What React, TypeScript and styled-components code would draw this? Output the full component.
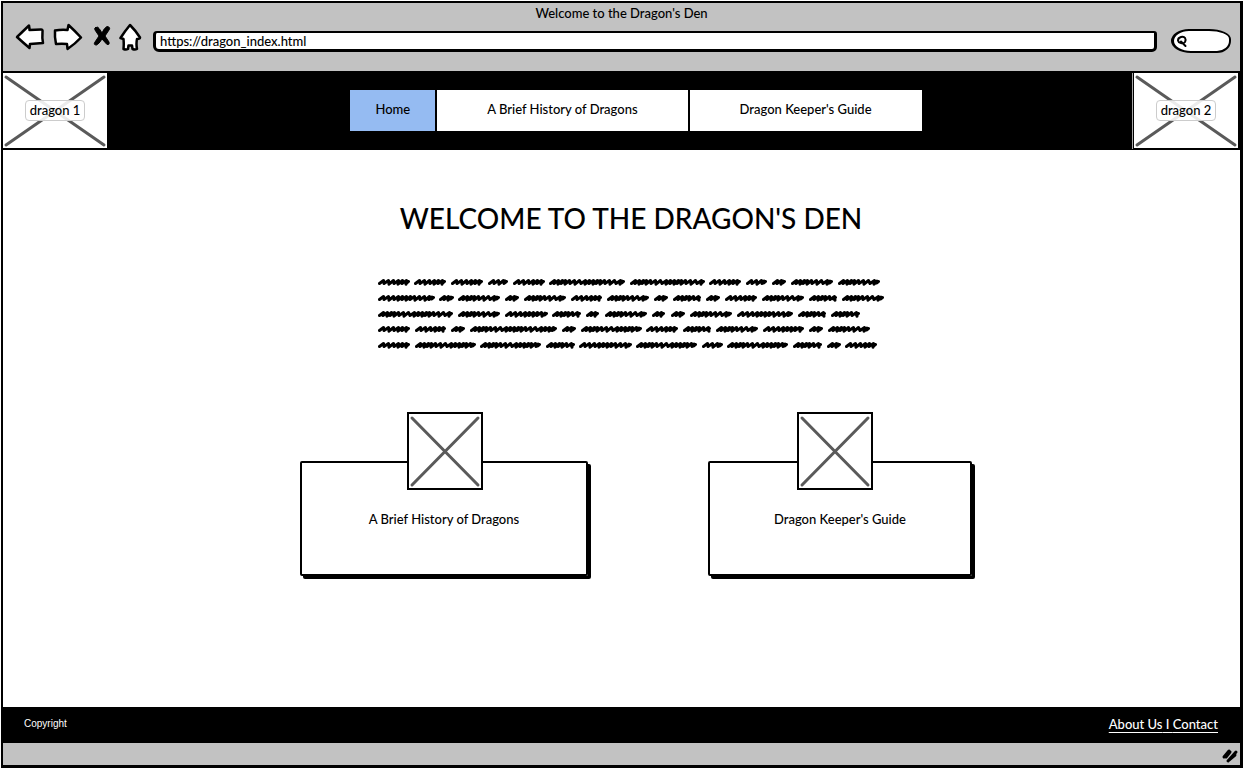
import React from "react";
import styled, { createGlobalStyle } from "styled-components";

const ink = "#000";
const chrome = "#c2c2c2";

const GlobalStyle = createGlobalStyle`
  *, *::before, *::after { box-sizing: border-box; }
  body {
    margin: 0;
    background: #fff;
    color: ${ink};
    font: 500 13px/18px Lato, "Liberation Sans", sans-serif;
  }
  a { color: inherit; text-decoration: none; }
`;

const Page = styled.div`
  display: flex;
  min-height: 100vh;
  padding: 1px;
`;

const Window = styled.div`
  flex: 1;
  min-width: 0;
  display: flex;
  flex-direction: column;
  border: 3px solid ${ink};
  border-width: 2px 3px 3px 2px;
  background: #fff;
`;

const Chrome = styled.div`
  background: ${chrome};
`;

const TitleBar = styled.div`
  padding: 1px 0;
  text-align: center;
`;

const Toolbar = styled.form`
  display: flex;
  align-items: flex-start;
  gap: 8px;
  height: 48px;
  padding: 0 9px 0 12px;
`;

const ToolButton = styled.button`
  flex: none;
  display: block;
  padding: 0;
  border: 0;
  background: none;
  cursor: pointer;
  svg { display: block; }
`;

const AddressField = styled.input`
  flex: 1;
  min-width: 0;
  height: 21px;
  margin: 8px 0 0;
  padding: 0 4px 1px;
  border: 3px solid ${ink};
  border-width: 2px 3px 3px;
  border-radius: 4px 3px 5px 6px;
  background: #fff;
  color: ${ink};
  font: inherit;
  outline: 0;
`;

const SearchBox = styled.label`
  flex: none;
  display: flex;
  align-items: center;
  width: 60px;
  height: 24px;
  margin: 6px 0 0 6px;
  padding-left: 2px;
  border: 3px solid ${ink};
  border-width: 2px 2px 2px 3px;
  border-radius: 18px 22px 14px 20px / 12px 10px 12px 12px;
  background: #fff;
  svg { flex: none; display: block; }
`;

const SearchField = styled.input`
  flex: 1;
  min-width: 0;
  height: 16px;
  padding: 0 4px;
  border: 0;
  background: none;
  font: inherit;
  outline: 0;
`;

const Banner = styled.header`
  display: flex;
  align-items: center;
  justify-content: space-between;
  height: 79px;
  background: ${ink};
`;

const BannerImage = styled.div`
  flex: none;
  display: grid;
  place-items: center;
  width: 104px;
  height: 75px;
  background: #fff;
  > * { grid-area: 1 / 1; }
`;

const BannerFrame = styled.div<{ $edge?: boolean }>`
  padding: 0 2px 1px ${(p) => (p.$edge ? 1 : 0)}px;
  border-left: ${(p) => (p.$edge ? "1px solid #aaa" : "0")};
`;

const Cross = styled.svg`
  display: block;
  width: 100%;
  height: 100%;
  stroke: #5a5a5a;
  stroke-width: 3;
  stroke-linecap: round;
`;

const Caption = styled.span`
  z-index: 1;
  padding: 0 4px 1px;
  border: 1px solid #ccc;
  border-radius: 4px;
  background: rgba(255, 255, 255, 0.88);
`;

const Nav = styled.nav`
  display: flex;
  gap: 2px;
  margin-left: 31px;
`;

const NavLink = styled.a<{ $active?: boolean; $pad: number }>`
  padding: 10px ${(p) => p.$pad}px 13px;
  background: ${(p) => (p.$active ? "#95bbf2" : "#fff")};
`;

const Main = styled.main`
  flex: 1;
  display: flex;
  flex-direction: column;
  align-items: center;
  padding: 50px 0 80px 19px;
`;

const Heading = styled.h1`
  margin: 0;
  font-size: 28px;
  line-height: 36px;
  font-weight: 500;
`;

const Scribble = styled.svg`
  display: block;
  margin-top: 38px;
  fill: none;
  stroke: ${ink};
  stroke-width: 3;
  stroke-linecap: round;
  stroke-linejoin: round;
`;

const Cards = styled.div`
  display: flex;
  gap: 120px;
  margin-top: 107px;
  padding-left: 10px;
`;

const Card = styled.a<{ $width: number }>`
  display: flex;
  flex-direction: column;
  align-items: stretch;
  width: ${(p) => p.$width}px;
  min-height: 115px;
  border: 2px solid ${ink};
  border-radius: 2px;
  box-shadow: 3px 3px 0 ${ink};
  text-align: center;
`;

const Thumb = styled.div<{ $inset: number }>`
  width: 76px;
  height: 78px;
  margin: -51px 0 20px ${(p) => p.$inset}px;
  border: 2px solid ${ink};
  background: #fff;
`;

const Footer = styled.footer`
  display: flex;
  align-items: center;
  justify-content: space-between;
  height: 36px;
  padding: 0 22px 2px 21px;
  background: ${ink};
  color: #fff;
`;

const Copyright = styled.small`
  font: 10px/14px "Liberation Sans", sans-serif;
`;

const FooterLinks = styled.span`
  text-decoration: underline;
  text-underline-offset: 3px;
  text-decoration-thickness: 1px;
`;

const StatusBar = styled.div`
  display: flex;
  justify-content: flex-end;
  height: 22px;
  padding: 5px 1px 0 0;
  background: ${chrome};
`;

function Icon({ width, d, fill = "#fff", stroke = 2.5 }: { width: number; d: string; fill?: string; stroke?: number }) {
  return (
    <svg width={width} height="30" viewBox={`0 0 ${width} 30`} fill={fill} stroke={ink} strokeWidth={stroke} strokeLinejoin="round" strokeLinecap="round">
      <path d={d} />
    </svg>
  );
}

function Crossed({ w, h }: { w: number; h: number }) {
  return (
    <Cross viewBox={`0 0 ${w} ${h}`} preserveAspectRatio="none" aria-hidden="true">
      <path d={`M3 4L${w - 3} ${h - 3}M${w - 3} 4L3 ${h - 3}`} />
    </Cross>
  );
}

// Start and end of every placeholder word, line by line.
const lines: number[][][] = [
  [[0, 32], [36, 68], [73, 105], [110, 130], [135, 167], [171, 247], [252, 327], [331, 363], [368, 389], [394, 408], [413, 455], [460, 502]],
  [[0, 57], [61, 76], [80, 122], [127, 141], [146, 188], [193, 224], [229, 271], [276, 290], [295, 323], [328, 342], [347, 379], [384, 426], [431, 459], [464, 506]],
  [[0, 75], [80, 122], [127, 170], [174, 203], [208, 221], [227, 269], [274, 287], [293, 307], [312, 354], [359, 415], [420, 448], [453, 482]],
  [[0, 32], [37, 68], [73, 87], [92, 179], [184, 198], [203, 264], [268, 300], [305, 333], [338, 380], [385, 426], [431, 445], [450, 492]],
  [[0, 32], [37, 98], [102, 163], [168, 197], [201, 254], [258, 319], [324, 345], [349, 410], [415, 444], [449, 463], [467, 499]],
];

const sparse = [5, 5, 5, 4, 4, 4, 4];
const dense = [4, 4, 3, 4, 5, 5, 6, 4];

function word(from: number, to: number, y: number) {
  const length = to - from;
  const steps = length < 16 || (length > 26 && length < 30) || length > 58 || length === 42 ? dense : sparse;
  let x = from + 1.5;
  let d = `M${x} ${y + 1.5}`;
  for (let i = 0; x < to - 6; i++) {
    const step = steps[i % steps.length];
    d += `L${x + 4} ${y - 1.5}L${x + step - 0.5} ${y + 1.5 + (i % 2) * 0.7}`;
    x += step;
  }
  return `${d}L${to - 3} ${y - 1}L${to - 3.5} ${y + 1}L${to - 1.5} ${y - 0.5}`;
}

function PlaceholderText() {
  return (
    <Scribble width="506" height="80" viewBox="0 0 506 80" role="img" aria-label="Placeholder paragraph">
      {lines.map((row, i) => (
        <path key={i} d={row.map(([a, b]) => word(a, b, 8 + Math.round(i * 15.8))).join("")} />
      ))}
    </Scribble>
  );
}

export default function App() {
  return (
    <Page>
      <GlobalStyle />
      <Window>
        <Chrome>
          <TitleBar>Welcome to the Dragon's Den</TitleBar>
          <Toolbar onSubmit={(e) => e.preventDefault()}>
            <ToolButton type="button" aria-label="Back">
              <Icon width={30} d="M2 14L14 2.500Q14.500 5 14.500 7L26 6.500Q28 6.500 27.500 9Q27 15 28 20L15 21L14.500 25Q8 19.500 2 14Z" />
            </ToolButton>
            <ToolButton type="button" aria-label="Forward">
              <Icon width={30} d="M28 14.500Q22 8 15.500 2L14.500 7Q8 6.500 2 7.500Q1.500 14 3 21Q9 20.500 14 21L14.500 26Q22 21 28 14.500Z" />
            </ToolButton>
            <ToolButton type="button" aria-label="Stop">
              <Icon width={20} fill="#000" stroke={1} d="M4.500 4.500Q7 3 8.500 6L11 10Q13 5 16 3.500Q20 4 18 7L14 13L18 19Q19 22 16 21.500L11 16Q8 21 5.500 22Q2 22 4 19L8 13L4 7Q3 5 4.500 4.500Z" />
            </ToolButton>
            <ToolButton type="button" aria-label="Home">
              <Icon width={26} d="M11 2Q17 8 21 14.500Q21 16 18 16Q17 21 18 26Q16 27 13.500 26L13 22.500H9.500L9 26Q7 27 4.500 26Q5 21 4.500 16L1.500 15Q6 8 11 2Z" />
            </ToolButton>
            <AddressField aria-label="Address" defaultValue="https://dragon_index.html" />
            <SearchBox>
              <svg width="12" height="14" viewBox="0 0 12 14" fill="none" stroke={ink} strokeWidth="2" strokeLinecap="round" aria-hidden="true">
                <path d="M5 3C9 2 10.500 5 9 8C7 10.500 2.500 9 2 6.500C2 4 3 3.500 5 3ZM5 7.500L9.500 12" />
              </svg>
              <SearchField type="search" aria-label="Search" />
            </SearchBox>
          </Toolbar>
        </Chrome>

        <Banner>
          <BannerFrame>
            <BannerImage>
              <Crossed w={104} h={75} />
              <Caption>dragon 1</Caption>
            </BannerImage>
          </BannerFrame>
          <Nav>
            <NavLink href="#home" $active $pad={25}>Home</NavLink>
            <NavLink href="#history" $pad={50}>A Brief History of Dragons</NavLink>
            <NavLink href="#guide" $pad={50}>Dragon Keeper's Guide</NavLink>
          </Nav>
          <BannerFrame $edge>
            <BannerImage>
              <Crossed w={104} h={75} />
              <Caption>dragon 2</Caption>
            </BannerImage>
          </BannerFrame>
        </Banner>

        <Main>
          <Heading>WELCOME TO THE DRAGON'S DEN</Heading>
          <PlaceholderText />
          <Cards>
            <Card href="#history" $width={288}>
              <Thumb $inset={105}><Crossed w={72} h={74} /></Thumb>
              A Brief History of Dragons
            </Card>
            <Card href="#guide" $width={264}>
              <Thumb $inset={87}><Crossed w={72} h={74} /></Thumb>
              Dragon Keeper's Guide
            </Card>
          </Cards>
        </Main>

        <Footer>
          <Copyright>Copyright</Copyright>
          <FooterLinks>
            <a href="#about">About Us</a> I <a href="#contact">Contact</a>
          </FooterLinks>
        </Footer>
        <StatusBar>
          <svg width="18" height="16" viewBox="0 0 18 16" stroke={ink} strokeWidth="3" strokeLinecap="round" aria-hidden="true">
            <path d="M3 9L8 3M7 13L15 4M5 9L9 4M8 12L14 7" />
          </svg>
        </StatusBar>
      </Window>
    </Page>
  );
}
